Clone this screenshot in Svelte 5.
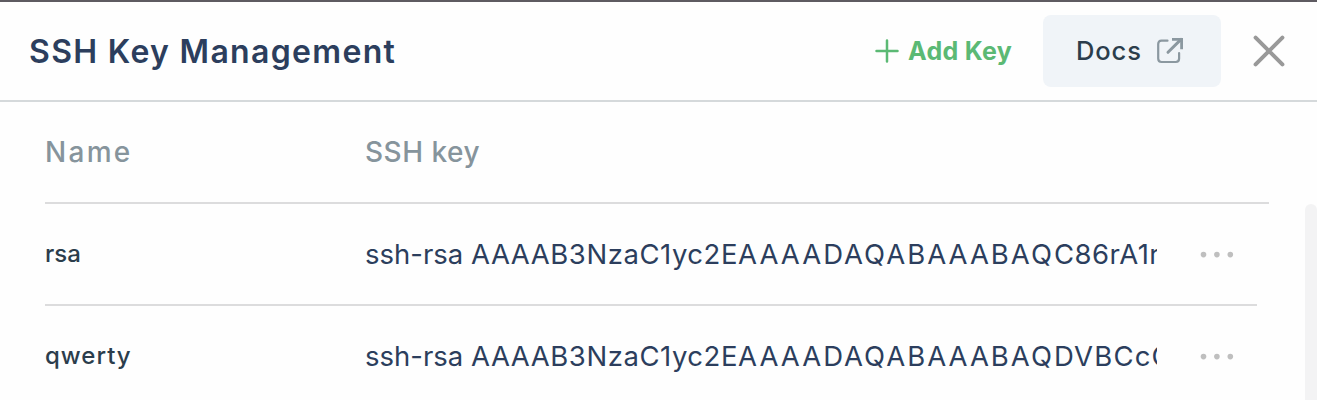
<script>
  const keys = [
    { name: 'rsa', cls: 'short', type: 'ssh-rsa', head: 'AAAAB3NzaC1yc2E', mid: 'AAAADAQABAAABAQ', tail: 'C86rA1r' },
    { name: 'qwerty', cls: 'long', type: 'ssh-rsa', head: 'AAAAB3NzaC1yc2E', mid: 'AAAADAQABAAABAQ', tail: 'DVBCcC' }
  ];
</script>

<main class="panel">
  <header>
    <h1>SSH Key Management</h1>
    <button class="add">
      <svg width="24" height="24" viewBox="0 0 24 24"><path d="M12 1.5v21M1.5 12h21" /></svg>
      <span>Add Key</span>
    </button>
    <button class="docs">
      <span>Docs</span>
      <svg width="28" height="28" viewBox="0 0 28 28">
        <path class="box" d="M11.5 3.7H5.5Q2.2 3.7 2.2 7V21.6Q2.2 25 5.5 25H19.8Q23.1 25 23.1 21.6V16" />
        <path class="arrow" d="M12 15.3L25 2.4" />
        <path class="tip" d="M16 1H27V12.2H24.2V5L22.8 3.8H16Z" />
      </svg>
    </button>
    <button class="close" aria-label="Close">
      <svg width="32" height="32" viewBox="0 0 32 32"><path d="M2.6 2.6L29.4 29.4M29.4 2.6L2.6 29.4" /></svg>
    </button>
  </header>

  <section class="columns">
    <span class="name-head">Name</span>
    <span class="key-head">SSH key</span>
  </section>

  <div class="body">
    <div class="list">
      {#each keys as key}
        <div class="row">
          <span class="name {key.cls}">{key.name}</span>
          <span class="key"><span class="type">{key.type}</span><span class="head">{key.head}</span><span class="mid">{key.mid}</span><span class="tail {key.cls}">{key.tail}</span></span>
          <button class="more" aria-label="More">
            <svg width="36" height="8" viewBox="0 0 36 8">
              <circle cx="4.5" cy="4.6" r="2.8" /><circle cx="17.9" cy="4.6" r="2.8" /><circle cx="31.3" cy="4.6" r="2.8" />
            </svg>
          </button>
        </div>
      {/each}
    </div>
    <div class="track"></div>
  </div>
</main>

<style>
  :global(body) { background: #fefefe; overflow: hidden; }
  .panel {
    box-sizing: border-box;
    height: 400px;
    overflow: hidden;
    border-top: 2px solid #5e5b61;
    background: #fefefe;
    font-family: Inter, "Liberation Sans", sans-serif;
    white-space: nowrap;
  }
  button { border: 0; padding: 0; background: none; font: inherit; }
  svg { display: block; flex: none; fill: none; }
  header {
    box-sizing: border-box;
    display: flex;
    align-items: center;
    height: 100px;
    padding: 0 32px 0 29px;
    border-bottom: 2px solid #d5d9db;
  }
  h1 {
    margin: 0;
    padding-top: 1px;
    flex: 1;
    font-size: 32px;
    line-height: 40px;
    font-weight: 600;
    letter-spacing: 1.32px;
    color: #2c3e5d;
  }
  .add { display: flex; align-items: center; gap: 9px; width: 168px; color: #5bb974; font-size: 25px; font-weight: 650; letter-spacing: 0.3px; }
  .add svg { stroke: #5bb974; stroke-width: 2.5; stroke-linecap: round; }
  .docs {
    box-sizing: border-box;
    display: flex;
    align-items: center;
    justify-content: space-between;
    width: 178px;
    height: 72px;
    padding: 0 37px 0 33px;
    border-radius: 8px;
    background: #f0f4f8;
    color: #2b3d4c;
    font-size: 25.5px;
    font-weight: 500;
    letter-spacing: 0.9px;
  }
  .docs span { padding-bottom: 2px; }
  .docs .box { stroke: #8b98a0; stroke-width: 2.2; stroke-linecap: round; }
  .docs .arrow { stroke: #8b98a0; stroke-width: 3; stroke-linecap: round; }
  .docs .tip { fill: #8b98a0; }
  .close { margin-left: 32px; }
  .close svg { stroke: #999; stroke-width: 4; stroke-linecap: round; }
  .columns {
    box-sizing: border-box;
    display: grid;
    grid-template-columns: 320px 1fr;
    align-items: center;
    height: 102px;
    margin: 0 48px 0 45px;
    border-bottom: 2px solid #dcdcdd;
    color: #86949c;
    font-size: 28px;
    font-weight: 500;
  }
  .name-head { letter-spacing: 2.3px; }
  .key-head { letter-spacing: 0.5px; }
  .body { display: flex; justify-content: space-between; }
  .list { width: 1212px; margin-left: 45px; }
  .row {
    box-sizing: border-box;
    display: grid;
    grid-template-columns: 320px 792px 1fr;
    align-items: center;
    height: 102px;
    border-bottom: 2px solid #dcdcdd;
  }
  .name { color: #2b3d4c; font-size: 24px; line-height: 30px; font-weight: 500; }
  .name.long { letter-spacing: 1px; }
  .key { display: flex; overflow: hidden; color: #2c3e5d; font-size: 27.5px; line-height: 40px; font-weight: 400; }
  .type { flex: 0 0 106px; }
  .head { flex: 0 0 266px; letter-spacing: 0.55px; }
  .mid { flex: 0 0 314px; letter-spacing: 2px; }
  .tail.short { letter-spacing: 0.45px; }
  .tail.long { letter-spacing: 1.2px; }
  .more { margin-left: 42px; }
  .more svg { fill: #bfbfbf; }
  .track { width: 12px; height: 220px; border-radius: 6px; background: #f3f3f4; }
</style>
